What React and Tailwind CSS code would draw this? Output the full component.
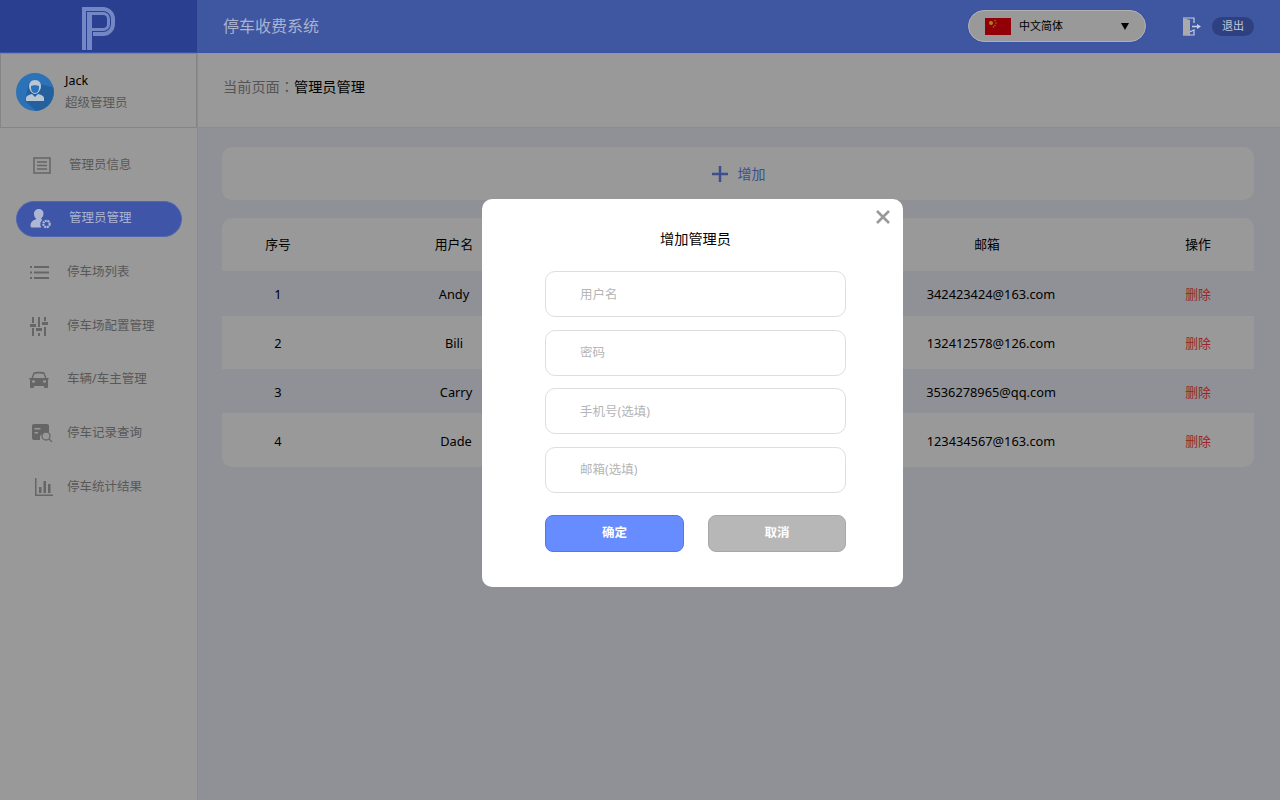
const font = { fontFamily: '"Noto Sans", "Noto Sans CJK SC", sans-serif' };

function Logo() {
  return (
    <svg width="33" height="43" viewBox="0 0 33 43" fill="none" stroke="#7387c6">
      <path d="M2 43V2h19a10 10 0 0 1 10 10v5a10 10 0 0 1-10 10H11" strokeWidth="4" />
      <path d="M6.500 43V6.500H21a5.500 5.500 0 0 1 5.500 5.500v5a5.500 5.500 0 0 1-5.500 5.500H9" strokeWidth="3" />
      <rect x="5" y="5" width="5" height="38" fill="#7387c6" stroke="none" />
    </svg>
  );
}

function Avatar() {
  return (
    <svg width="38" height="38" viewBox="0 0 38 38">
      <circle cx="19" cy="19" r="19" fill="#2c72b8" />
      <path d="M13 9 37 14A19 19 0 0 1 20 38L9 28Z" fill="#25609e" />
      <path d="M19 7c-4 0-6 3-6 6 0 4 3 8 6 8s6-4 6-8c0-3-2-6-6-6z" fill="#b9c6d3" />
      <path d="M15 13c2-1 6-1 8 0v2c0 3-2 5-4 5s-4-2-4-5z" fill="#2c72b8" />
      <path d="M10 28v-3c0-2 2-3 6-4l3 3 3-3c4 1 6 2 6 4v3z" fill="#b9c6d3" />
    </svg>
  );
}

function InfoIcon() {
  return (
    <svg width="18" height="17" viewBox="0 0 18 17" fill="none" stroke="#666" strokeWidth="1.500">
      <rect x="1" y="1" width="16" height="15" />
      <path d="M4 5h10M4 8.500h10M4 12h10" />
    </svg>
  );
}

function AdminIcon() {
  return (
    <svg width="22" height="21" viewBox="0 0 22 21">
      <path d="M9 1c-3 0-5 2-5 5 0 2 1 4 2.500 5C3 12 .500 14 .500 18c0 1 1 1.500 2 1.500h9c-1-1-1.500-3-1-5 .500-1 1-2 2-2.500-.500-.500-1-1-1.500-1.500 1.500-1 2.500-3 2.500-5 0-3-2-4.500-4.500-4.500z" fill="#adb7d4" />
      <circle cx="16.500" cy="16" r="3.200" fill="none" stroke="#adb7d4" strokeWidth="2.200" strokeDasharray="2 .6" />
    </svg>
  );
}

function ListIcon() {
  return (
    <svg width="19" height="15" viewBox="0 0 19 15" fill="#666">
      <rect x="0" y="1" width="2" height="2" />
      <rect x="0" y="6.500" width="2" height="2" />
      <rect x="0" y="12" width="2" height="2" />
      <rect x="4" y="1" width="15" height="2" />
      <rect x="4" y="6.500" width="15" height="2" />
      <rect x="4" y="12" width="15" height="2" />
    </svg>
  );
}

function SlidersIcon() {
  return (
    <svg width="18" height="19" viewBox="0 0 18 19" fill="#666">
      <rect x="2" y="0" width="2" height="6" />
      <rect x="0" y="7" width="6" height="3" />
      <rect x="2" y="11" width="2" height="8" />
      <rect x="8" y="0" width="2" height="10" />
      <rect x="6" y="11" width="6" height="3" />
      <rect x="8" y="16" width="2" height="3" />
      <rect x="14" y="0" width="2" height="4" />
      <rect x="12" y="5" width="6" height="3" />
      <rect x="14" y="10" width="2" height="9" />
    </svg>
  );
}

function CarIcon() {
  return (
    <svg width="20" height="18" viewBox="0 0 20 18">
      <path d="M4.500 1.500C6 .500 14 .500 15.500 1.500L17.500 7H19c.500 0 1 .500.800 1l-.800.800V16c0 .800-.500 1-1 1h-2c-.500 0-1-.500-1-1v-1H5v1c0 .500-.500 1-1 1H2c-.500 0-1-.200-1-1V8.800L.200 8C0 7.500.500 7 1 7h1.500z" fill="#666" />
      <path d="M5.500 3C7 2.300 13 2.300 14.500 3L16 7H4z" fill="#999" />
      <rect x="3" y="9.500" width="3" height="2" fill="#999" />
      <rect x="14" y="9.500" width="3" height="2" fill="#999" />
    </svg>
  );
}

function RecordIcon() {
  return (
    <svg width="21" height="18" viewBox="0 0 21 18">
      <path d="M2 0h13a2 2 0 0 1 2 2v6h-5l-4 4v4H2a2 2 0 0 1-2-2V2a2 2 0 0 1 2-2z" fill="#666" />
      <rect x="2.500" y="4" width="6" height="1.500" fill="#999" />
      <rect x="2.500" y="8" width="3.500" height="1.500" fill="#999" />
      <circle cx="14" cy="12" r="4" fill="none" stroke="#666" strokeWidth="1.300" />
      <path d="m17 15 3 3" stroke="#666" strokeWidth="1.300" />
    </svg>
  );
}

function ChartIcon() {
  return (
    <svg width="18" height="18" viewBox="0 0 18 18" fill="#666">
      <rect x="0" y="0" width="1.500" height="18" />
      <rect x="0" y="16.500" width="18" height="1.500" />
      <rect x="4" y="9" width="2.500" height="6" />
      <rect x="8.500" y="3" width="2.500" height="12" />
      <rect x="13" y="6" width="2.500" height="9" />
    </svg>
  );
}

function Flag() {
  return (
    <svg width="26" height="17" viewBox="0 0 26 17">
      <rect width="26" height="17" fill="#910006" />
      <circle cx="6" cy="5" r="2" fill="#a8861a" />
      <circle cx="10" cy="2.500" r=".7" fill="#a8861a" />
      <circle cx="11" cy="5" r=".7" fill="#a8861a" />
      <circle cx="10" cy="7.500" r=".7" fill="#a8861a" />
      <circle cx="8.500" cy="9" r=".7" fill="#a8861a" />
    </svg>
  );
}

function ExitIcon() {
  return (
    <svg width="19" height="19" viewBox="0 0 19 19">
      <path d="M1 1h11v5M12 13v5H1z" fill="none" stroke="#c3cde6" strokeWidth="1.200" />
      <path d="M1 1l7 2v15.500L1 18z" fill="#aaa" />
      <path d="M10 9.500h6" stroke="#c3cde6" strokeWidth="1.600" />
      <path d="M15 7l4 2.500-4 2.500z" fill="#c3cde6" />
    </svg>
  );
}

const nav = [
  { label: "管理员信息", icon: <InfoIcon />, box: "w-[53px] pl-[17px]" },
  { label: "管理员管理", icon: <AdminIcon />, box: "w-[52px] pl-[13px]", active: true },
  { label: "停车场列表", icon: <ListIcon />, box: "w-[51px] pl-[14px]" },
  { label: "停车场配置管理", icon: <SlidersIcon />, box: "w-[51px] pl-[14px]" },
  { label: "车辆/车主管理", icon: <CarIcon />, box: "w-[51px] pl-[13px]" },
  { label: "停车记录查询", icon: <RecordIcon />, box: "w-[51px] pl-[16px]" },
  { label: "停车统计结果", icon: <ChartIcon />, box: "w-[51px] pl-[19px]" },
];

const rows = [
  { no: 1, name: "Andy", mail: "342423424@163.com", h: "h-[45px]", striped: true },
  { no: 2, name: "Bili", mail: "132412578@126.com", h: "h-[53px]" },
  { no: 3, name: "Carry", nudge: "pl-[4px]", mail: "3536278965@qq.com", h: "h-[44px]", striped: true },
  { no: 4, name: "Dade", nudge: "pl-[4px]", mail: "123434567@163.com", h: "h-[54px]" },
];

const cols = "grid grid-cols-[112px_240px_258px_310px_112px] items-center text-center";
const fields = ["用户名", "密码", "手机号(选填)", "邮箱(选填)"];

export default function App() {
  return (
    <div className="relative h-[800px] w-[1280px] overflow-hidden bg-[#8f9197] text-[12.800px] text-black" style={font}>
      <header className="flex h-[53px] border-b border-[#3a52a8] bg-[#3f56a0]">
        <div className="flex w-[197px] items-start justify-center bg-[#2a3f8f] pt-[7px]">
          <Logo />
        </div>
        <div className="flex flex-1 items-center pl-[26px]">
          <span className="text-[16px] text-[#a9b3d0]">停车收费系统</span>
          <div className="ml-auto flex h-[32px] w-[178px] items-center rounded-full border border-[#b2b2b2] bg-[#999] pl-[16px] pr-[16px] shadow-[0_0_0_1px_#3a52a8]">
            <Flag />
            <span className="ml-[8px] text-[11px]">中文简体</span>
            <span className="ml-auto h-0 w-0 border-x-[4px] border-t-[7px] border-x-transparent border-t-black" />
          </div>
          <div className="ml-[36px] flex items-center">
            <ExitIcon />
          </div>
          <div className="ml-[11px] mr-[26px] flex h-[19px] w-[42px] items-center justify-center rounded-full bg-[#2f4080] text-[11px] text-[#c3c9dc]">
            退出
          </div>
        </div>
      </header>

      <div className="flex h-[747px]">
        <aside className="w-[198px] shrink-0 border-r border-[#8b8b8b] bg-[#999]">
          <div className="flex h-[75px] items-center border border-[#858585] pl-[15px] pt-[2px]">
            <Avatar />
            <div className="ml-[11px]">
              <div className="text-[12.500px] leading-[22px]">Jack</div>
              <div className="text-[12.500px] leading-[22px] text-[#585858]">超级管理员</div>
            </div>
          </div>
          <nav className="mt-[19px] flex flex-col gap-[17.700px] pl-[16px] text-[12.500px]">
            {nav.map((item) => (
              <div
                key={item.label}
                className={
                  item.active
                    ? "flex h-[36px] w-[166px] items-center rounded-full border border-[#4f66b4] bg-[#3f56a8] text-[#a9b3d0]"
                    : "flex h-[36px] w-[166px] items-center text-[#585858]"
                }
              >
                <span className={`flex justify-start ${item.box}`}>{item.icon}</span>
                <span>{item.label}</span>
              </div>
            ))}
          </nav>
        </aside>

        <main className="flex-1">
          <div className="flex h-[75px] items-center border-b border-[#8b8c91] bg-[#999] pb-[7px] pl-[25px] text-[14.200px] text-[#555]">
            当前页面<span className="font-['Noto_Sans_CJK_TC']">：</span><span className="text-black">管理员管理</span>
          </div>
          <div className="pl-[24px] pr-[26px] pt-[19px]">
            <div className="flex h-[53px] items-center justify-center gap-[9px] rounded-[10px] bg-[#999] text-[14px] text-[#3c5090]">
              <svg width="18" height="18" viewBox="0 0 18 18" stroke="#3c5090" strokeWidth="2.500">
                <path d="M9 1v16M1 9h16" />
              </svg>
              <span>增加</span>
            </div>
            <div className="mt-[18px] overflow-hidden rounded-[10px] bg-[#999]">
              <div className={`${cols} h-[53px]`}>
                <span>序号</span>
                <span>用户名</span>
                <span />
                <span>邮箱</span>
                <span>操作</span>
              </div>
              {rows.map((r) => (
                <div key={r.no} className={`${cols} ${r.h} pt-[3px] ${r.striped ? "bg-[#8f9197]" : ""}`}>
                  <span>{r.no}</span>
                  <span className={r.nudge}>{r.name}</span>
                  <span />
                  <span className="pl-[8px]">{r.mail}</span>
                  <span className="text-[#9c2424]">删除</span>
                </div>
              ))}
            </div>
          </div>
        </main>
      </div>

      <div className="absolute left-[482px] top-[199px] h-[388px] w-[421px] rounded-[10px] bg-white pl-[63px] pr-[57px]">
        <svg className="absolute right-[13px] top-[11px]" width="14" height="14" viewBox="0 0 14 14" stroke="#999" strokeWidth="2.600">
          <path d="M1 1l12 12M13 1L1 13" />
        </svg>
        <h2 className="pt-[29px] text-center text-[14.200px] font-normal leading-[22px]">增加管理员</h2>
        <div className="mt-[21px] flex flex-col gap-[12.500px]">
          {fields.map((f) => (
            <div key={f} className="flex h-[46px] items-center rounded-[10px] border border-[#dedede] pl-[34px] pt-[2px] text-[12.500px] text-[#b5b5b5]">
              {f}
            </div>
          ))}
        </div>
        <div className="mt-[22px] flex justify-between">
          <button className="h-[37px] w-[139px] rounded-[8px] border border-[#4d78f5] bg-[#668cff] pt-[1px] text-[12.500px] font-bold text-white">
            确定
          </button>
          <button className="h-[37px] w-[138px] rounded-[8px] border border-[#a8a8a8] bg-[#b7b7b7] pt-[1px] text-[12.500px] font-bold text-white">
            取消
          </button>
        </div>
      </div>
    </div>
  );
}
